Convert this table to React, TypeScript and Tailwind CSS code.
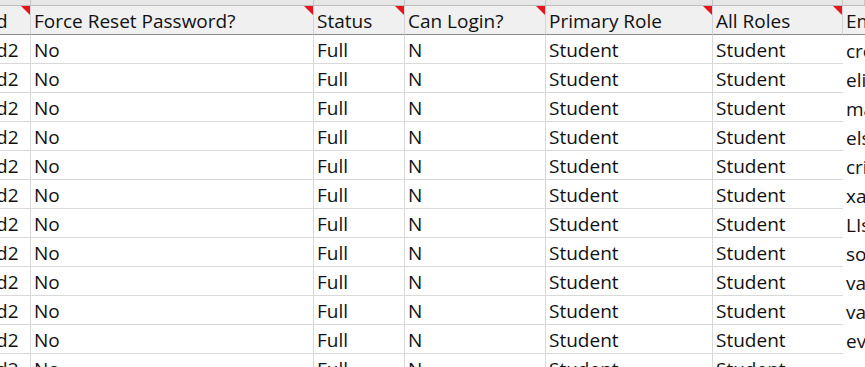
import { FC } from "react";

type Row = {
	pwd: string;
	reset: string;
	status: string;
	login: string;
	primary: string;
	roles: string;
	email: string;
};

const emails = [
	"croberts@school.org",
	"eliza.m@school.org",
	"mason.k@school.org",
	"elsa.p@school.org",
	"cristian.b@school.org",
	"xavier.t@school.org",
	"LIsa.n@school.org",
	"sophie.r@school.org",
	"valerie.d@school.org",
	"vanessa.g@school.org",
	"evan.h@school.org",
	"eamon.w@school.org",
];

const rows: Row[] = emails.map((email) => ({
	pwd: "Password2",
	reset: "No",
	status: "Full",
	login: "N",
	primary: "Student",
	roles: "Student",
	email,
}));

const cols = "grid grid-cols-[31px_283px_91px_141px_167px_130px_1fr]";

const HeaderCell: FC<{ label: string; note?: boolean; last?: boolean }> = ({
	label,
	note = true,
	last,
}) => (
	<div
		className={`relative h-[29px] flex items-end overflow-hidden whitespace-nowrap pl-[3px] bg-[#f0f0f0] border-b border-[#8a8a8a] ${
			last ? "" : "border-r border-r-[#d4d4d4]"
		}`}
	>
		<span className="leading-[26px]">{label}</span>
		{note && (
			<div className="absolute top-0 right-0 w-[9px] h-[9px] bg-[#e8141b] [clip-path:polygon(0_0,100%_0,100%_100%)]" />
		)}
	</div>
);

// bare: the email column has a white fill, so no gridlines; open: no right border
const Cell: FC<{ children: string; bare?: boolean; open?: boolean }> = ({
	children,
	bare,
	open,
}) => (
	<div
		className={`h-[29px] flex items-end overflow-hidden whitespace-nowrap pl-[3px] ${
			bare
				? "bg-white"
				: open
					? "border-b border-[#d9d9d9]"
					: "border-r border-b border-[#d9d9d9]"
		}`}
	>
		<span className="leading-[26px]">{children}</span>
	</div>
);

const App: FC = () => {
	return (
		<div
			className="w-[865px] h-[367px] overflow-hidden bg-white text-[#111] text-[19px]"
			style={{ fontFamily: '"Open Sans", "Noto Sans", sans-serif' }}
		>
			{/* column letter strip, cut off at the top */}
			<div className={`${cols} h-[6px] bg-[#e6e6e6] border-b border-[#bdbdbd]`}>
				{[0, 1, 2, 3, 4, 5, 6].map((i) => (
					<div key={i} className="border-r border-[#c6c6c6]" />
				))}
			</div>

			<div className={cols}>
				<div className="relative h-[29px] flex items-end overflow-hidden whitespace-nowrap bg-[#f0f0f0] border-b border-[#8a8a8a] border-r border-r-[#d4d4d4]">
					<span className="leading-[26px] ml-[-78px]">Password</span>
					<div className="absolute top-0 right-0 w-[9px] h-[9px] bg-[#e8141b] [clip-path:polygon(0_0,100%_0,100%_100%)]" />
				</div>
				<HeaderCell label="Force Reset Password?" />
				<HeaderCell label="Status" />
				<HeaderCell label="Can Login?" />
				<HeaderCell label="Primary Role" />
				<HeaderCell label="All Roles" />
				<HeaderCell label="Email" note={false} last />

				{rows.map((r, i) => (
					<div key={i} className="contents">
						<div className="h-[29px] flex items-end overflow-hidden whitespace-nowrap border-r border-b border-[#d9d9d9]">
							<span className="leading-[26px] ml-[-78px]">{r.pwd}</span>
						</div>
						<Cell>{r.reset}</Cell>
						<Cell>{r.status}</Cell>
						<Cell>{r.login}</Cell>
						<Cell>{r.primary}</Cell>
						<Cell open>{r.roles}</Cell>
						<Cell bare>{r.email}</Cell>
					</div>
				))}
			</div>
		</div>
	);
};

export default App;
